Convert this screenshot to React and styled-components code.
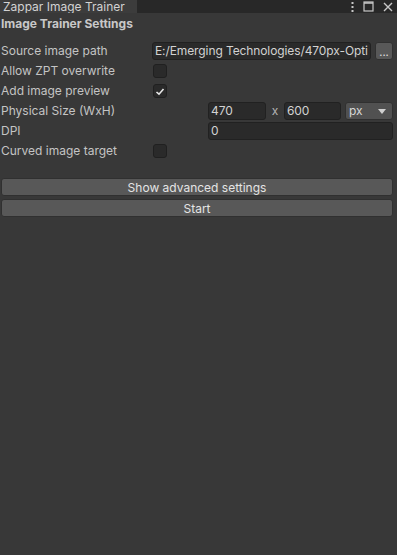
import React from 'react';
import styled, { createGlobalStyle } from 'styled-components';

const GlobalStyle = createGlobalStyle`
  html, body {
    margin: 0;
    padding: 0;
    background: #383838;
    height: 100%;
  }
  #root {
    min-height: 100%;
  }
  * {
    box-sizing: border-box;
  }
`;

const Window = styled.div`
  width: 397px;
  height: 555px;
  background: #383838;
  font-family: Inter, "Noto Sans", sans-serif;
  font-size: 12px;
  color: #c4c4c4;
  display: flex;
  flex-direction: column;
  overflow: hidden;
`;

const TabBar = styled.div`
  height: 13px;
  background: #282828;
  display: flex;
  align-items: stretch;
`;

const Tab = styled.div`
  width: 137px;
  background: #3c3c3c;
  color: #d2d2d2;
  padding-left: 3px;
  line-height: 13px;
  font-size: 12px;
  white-space: nowrap;
  overflow: hidden;
`;

const TabTools = styled.div`
  margin-left: auto;
  display: flex;
  align-items: center;
  gap: 9px;
  padding-right: 4px;
  color: #c8c8c8;
`;

const Body = styled.div`
  padding: 2px 4px 0 1px;
  display: flex;
  flex-direction: column;
`;

const Heading = styled.div`
  font-weight: 700;
  color: #c8c8c8;
  height: 17px;
  line-height: 17px;
  margin-bottom: 9px;
`;

const Row = styled.div`
  display: grid;
  grid-template-columns: 151px minmax(0, 1fr);
  align-items: center;
  height: 20px;
  line-height: 20px;
`;

const Label = styled.div`
  white-space: nowrap;
`;

const Controls = styled.div`
  display: flex;
  align-items: center;
  min-width: 0;
  gap: ${(p) => p.gap || 4}px;
  padding-left: ${(p) => p.indent || 0}px;
`;

const Field = styled.div`
  height: 18px;
  line-height: 16px;
  min-width: 0;
  background: #2a2a2a;
  border: 1px solid #212121;
  border-radius: 3px;
  padding: 0 2px;
  color: #d2d2d2;
  white-space: nowrap;
  overflow: hidden;
  letter-spacing: -0.1px;
  flex: ${(p) => (p.w ? `0 0 ${p.w}px` : '1 1 0')};
`;

const SmallButton = styled.div`
  flex: 0 0 18px;
  width: 18px;
  height: 18px;
  background: #585858;
  border-radius: 3px;
  color: #e0e0e0;
  font-size: 11px;
  line-height: 18px;
  text-align: center;
  border: 1px solid #303030;
`;

const Times = styled.span`
  width: 10px;
  text-align: center;
  color: #b4b4b4;
`;

const Dropdown = styled.div`
  flex: 1 1 auto;
  height: 18px;
  background: #515151;
  border: 1px solid #303030;
  border-radius: 3px;
  padding: 0 6px 0 3px;
  display: flex;
  align-items: center;
  justify-content: space-between;
  color: #d8d8d8;
  line-height: 16px;
`;

const Check = styled.div`
  width: 14px;
  height: 14px;
  margin-left: 1px;
  background: #2a2a2a;
  border: 1px solid #202020;
  border-radius: 3px;
  display: flex;
  align-items: center;
  justify-content: center;
`;

const Buttons = styled.div`
  margin-top: 17px;
  display: flex;
  flex-direction: column;
  gap: 3px;
`;

const Button = styled.div`
  height: 18px;
  line-height: 17px;
  background: #585858;
  border: 1px solid #303030;
  border-radius: 3px;
  text-align: center;
  color: #e4e4e4;
`;

const CheckMark = () => (
  <svg width="10" height="9" viewBox="0 0 10 9">
    <path d="M1.5 5 L4 7.2 L8.5 2" fill="none" stroke="#e8e8e8" strokeWidth="1.6" />
  </svg>
);

const App = () => (
  <Window>
    <GlobalStyle />
    <TabBar>
      <Tab>Zappar Image Trainer</Tab>
      <TabTools>
        <svg width="3" height="11" viewBox="0 0 3 11">
          <rect x="0.5" y="1" width="2" height="2" fill="#c8c8c8" />
          <rect x="0.5" y="5" width="2" height="2" fill="#c8c8c8" />
          <rect x="0.5" y="9" width="2" height="2" fill="#c8c8c8" />
        </svg>
        <svg width="11" height="11" viewBox="0 0 11 11">
          <rect x="1" y="1" width="9" height="9" fill="none" stroke="#c8c8c8" strokeWidth="1.2" />
          <line x1="1" y1="2" x2="10" y2="2" stroke="#c8c8c8" strokeWidth="1.5" />
        </svg>
        <svg width="10" height="10" viewBox="0 0 10 10">
          <path d="M1 1 L9 9 M9 1 L1 9" stroke="#c8c8c8" strokeWidth="1.4" />
        </svg>
      </TabTools>
    </TabBar>
    <Body>
      <Heading>Image Trainer Settings</Heading>
      <Row>
        <Label>Source image path</Label>
        <Controls>
          <Field>E:/Emerging Technologies/470px-Opti</Field>
          <SmallButton>...</SmallButton>
        </Controls>
      </Row>
      <Row>
        <Label>Allow ZPT overwrite</Label>
        <Controls>
          <Check />
        </Controls>
      </Row>
      <Row>
        <Label>Add image preview</Label>
        <Controls>
          <Check>
            <CheckMark />
          </Check>
        </Controls>
      </Row>
      <Row>
        <Label>Physical Size (WxH)</Label>
        <Controls indent={56} gap={4}>
          <Field w={58}>470</Field>
          <Times>x</Times>
          <Field w={57}>600</Field>
          <Dropdown>
            <span>px</span>
            <svg width="8" height="5" viewBox="0 0 8 5">
              <path d="M0 0 L8 0 L4 5 Z" fill="#d0d0d0" />
            </svg>
          </Dropdown>
        </Controls>
      </Row>
      <Row>
        <Label>DPI</Label>
        <Controls indent={56}>
          <Field>0</Field>
        </Controls>
      </Row>
      <Row>
        <Label>Curved image target</Label>
        <Controls>
          <Check />
        </Controls>
      </Row>
      <Buttons>
        <Button>Show advanced settings</Button>
        <Button>Start</Button>
      </Buttons>
    </Body>
  </Window>
);

export default App;
